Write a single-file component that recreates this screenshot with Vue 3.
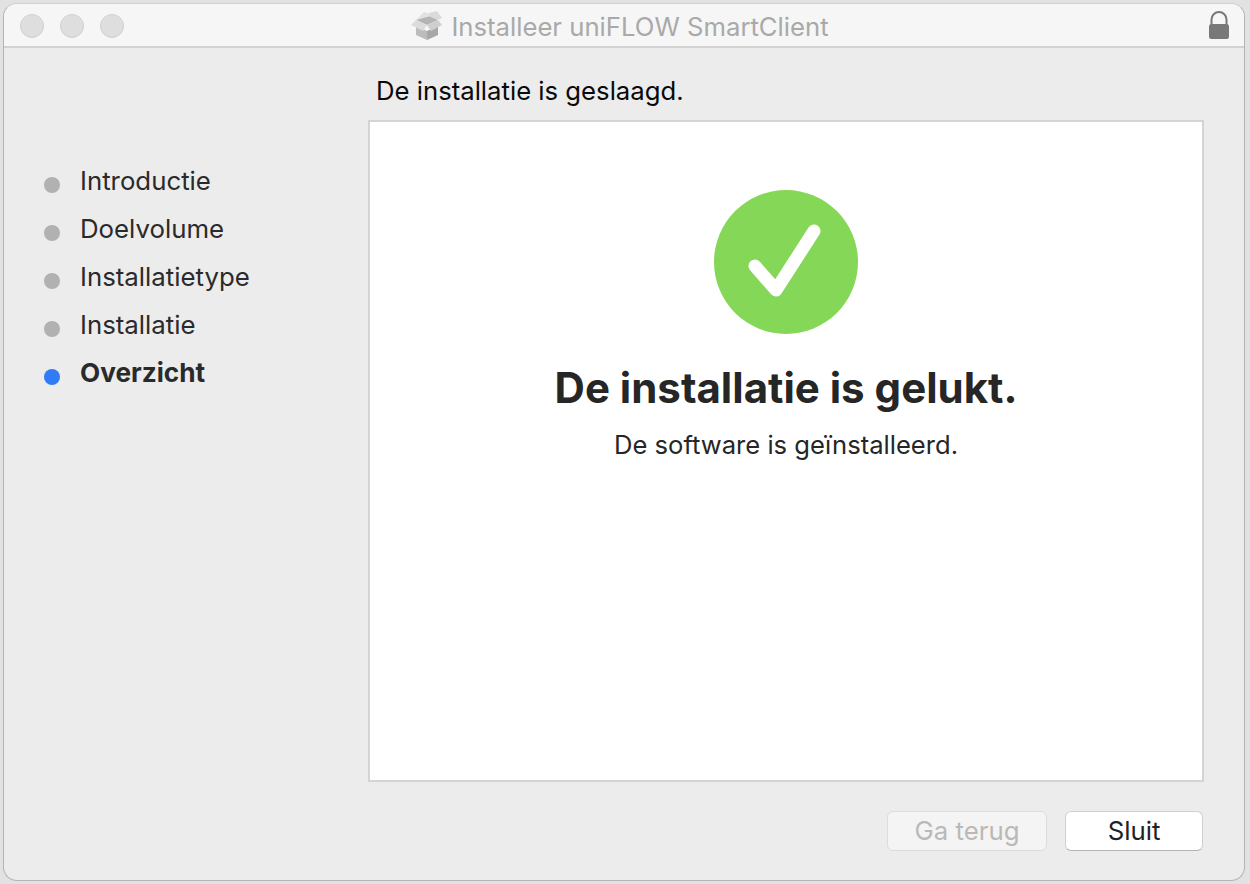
<template>
  <div class="screen">
    <div class="window">
      <header class="titlebar">
        <div class="lights">
          <span v-for="n in 3" :key="n" class="light" />
        </div>
        <div class="title">
          <svg class="title__icon" width="32" height="30" viewBox="0 0 32 30">
            <path d="M5 15 L16 20 L16 29 L5 24 Z" fill="#bcbcbc" />
            <path d="M16 20 L27 15 L27 24 L16 29 Z" fill="#a8a8a8" />
            <path d="M5 9 L16 4 L27 9 L16 14 Z" fill="#b4b4b4" />
            <path d="M5 9 L13 1 L23 4 L16 6 Z" fill="#e2e2e2" />
            <path d="M18 2 L26 0 L31 7 L27 9 L20 6 Z" fill="#dadada" />
            <path d="M5 9 L16 14 L12 20 L0 14 Z" fill="#dcdcdc" />
            <path d="M27 9 L16 14 L20 20 L31 14 Z" fill="#cfcfcf" />
          </svg>
          <span>Installeer uniFLOW SmartClient</span>
        </div>
        <svg class="lock" width="20" height="28" viewBox="0 0 20 28">
          <path d="M2.5 15 V8.5 a7.5 7.5 0 0 1 15 0 V15" fill="none" stroke="#787878" stroke-width="2" />
          <rect x="0" y="13" width="20" height="15" rx="2.5" fill="#787878" />
        </svg>
      </header>

      <div class="body">
        <nav class="steps">
          <div v-for="step in steps" :key="step" class="step" :class="{ 'step--active': step === current }">
            <span class="step__dot" />
            <span>{{ step }}</span>
          </div>
        </nav>

        <main class="main">
          <div class="heading">De installatie is geslaagd.</div>
          <section class="panel">
            <svg class="check" width="144" height="144" viewBox="0 0 144 144">
              <circle cx="72" cy="72" r="72" fill="#85d758" />
              <path d="M41 76 L62 100 L100 41" fill="none" stroke="#fff" stroke-width="13" stroke-linecap="round" stroke-linejoin="round" />
            </svg>
            <h1 class="panel__title">De installatie is gelukt.</h1>
            <p class="panel__text">De software is geïnstalleerd.</p>
          </section>
          <footer class="actions">
            <button class="btn btn--disabled" type="button">Ga terug</button>
            <button class="btn btn--close" type="button">Sluit</button>
          </footer>
        </main>
      </div>
    </div>
  </div>
</template>

<script setup>
const steps = ['Introductie', 'Doelvolume', 'Installatietype', 'Installatie', 'Overzicht'];
const current = 'Overzicht';
</script>

<style>
html, body {
  margin: 0;
  background: #e3e3e3;
}
</style>

<style scoped>
.screen {
  width: 1250px;
  height: 884px;
  padding: 3px 5px 3px 3px;
  box-sizing: border-box;
  background: #e2e2e2;
  font-family: Inter, "Liberation Sans", sans-serif;
  overflow: hidden;
}
.window {
  height: 100%;
  display: flex;
  flex-direction: column;
  box-sizing: border-box;
  border: 1px solid #b4b4b4;
  border-top-color: #d0d0d0;
  border-radius: 14px;
  background: #ececec;
  overflow: hidden;
}
.titlebar {
  height: 42px;
  flex: none;
  display: flex;
  align-items: center;
  justify-content: center;
  position: relative;
  background: #f6f6f6;
  border-bottom: 2px solid #d2d2d2;
}
.lights {
  position: absolute;
  left: 16px;
  top: 10px;
  display: flex;
  gap: 16px;
}
.light {
  width: 24px;
  height: 24px;
  box-sizing: border-box;
  border-radius: 50%;
  background: #dedede;
  border: 1px solid #d0d0d0;
}
.title {
  display: flex;
  align-items: center;
  gap: 8px;
  font-size: 25.7px;
  color: #a9a9a9;
  white-space: nowrap;
  padding: 2px 8px 0 0;
}
.lock {
  position: absolute;
  right: 15px;
  top: 7px;
}
.body {
  flex: 1;
  display: flex;
  min-height: 0;
}
.steps {
  width: 364px;
  flex: none;
  box-sizing: border-box;
  padding: 108px 0 0 40px;
}
.step {
  height: 48px;
  display: flex;
  align-items: center;
  gap: 20px;
  font-size: 25.8px;
  color: #2a2a2a;
}
.step__dot {
  width: 16px;
  height: 16px;
  border-radius: 50%;
  background: #b1b1b1;
  margin-top: 10px;
}
.step--active {
  font-weight: 700;
  font-size: 26.2px;
}
.step--active .step__dot {
  background: #2f7cf6;
}
.main {
  flex: 1;
  min-width: 0;
  display: flex;
  flex-direction: column;
  padding-right: 40px;
}
.heading {
  height: 72px;
  box-sizing: border-box;
  padding: 27px 0 0 8px;
  font-size: 25.7px;
  color: #0a0a0a;
}
.panel {
  height: 662px;
  box-sizing: border-box;
  border: 2px solid #d4d4d4;
  background: #fff;
  display: flex;
  flex-direction: column;
  align-items: center;
  padding-top: 68px;
}
.panel__title {
  margin: 26px 0 0;
  font-size: 42px;
  line-height: 56px;
  font-weight: 700;
  color: #262626;
}
.panel__text {
  margin: 13px 0 0;
  font-size: 25.6px;
  line-height: 32px;
  color: #262626;
}
.actions {
  display: flex;
  justify-content: flex-end;
  gap: 18px;
  padding: 29px 1px 0 0;
}
.btn {
  height: 40px;
  box-sizing: border-box;
  border-radius: 6px;
  font-family: inherit;
  font-size: 25.8px;
  padding: 0 0 2px;
}
.btn--disabled {
  width: 160px;
  background: #f4f4f4;
  border: 1px solid #dcdcdc;
  color: #b9b9b9;
}
.btn--close {
  width: 138px;
  background: #fff;
  border: 1px solid #d0d0d0;
  border-bottom-color: #b4b4b4;
  color: #222;
}
</style>
